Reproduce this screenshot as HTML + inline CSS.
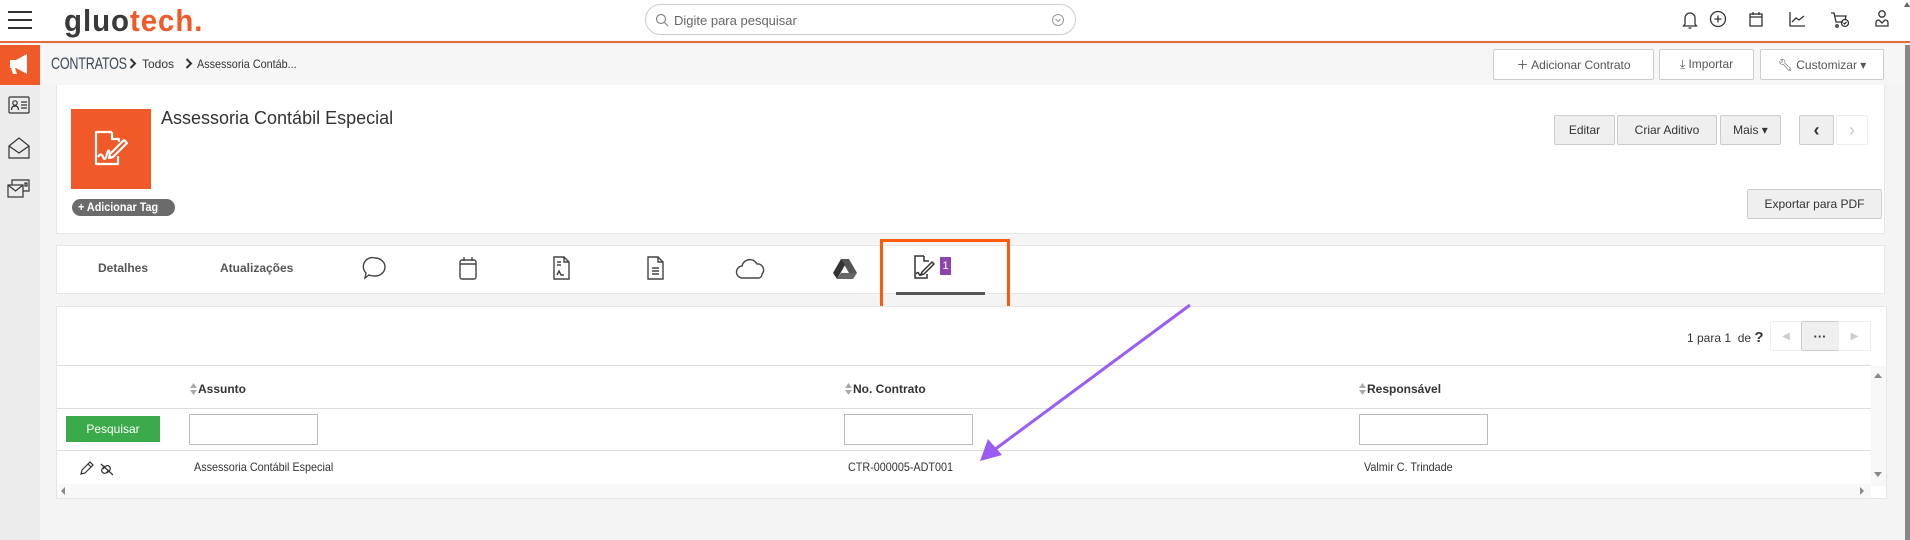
<!DOCTYPE html>
<html><head><meta charset="utf-8"><style>
*{box-sizing:border-box;margin:0;padding:0}
body{width:1910px;height:540px;overflow:hidden;background:#f4f4f4;font-family:"Liberation Sans",sans-serif;font-size:12px;color:#333;position:relative}
.a{position:absolute}
.btn{position:absolute;border:1px solid #ccc;background:#fff;color:#555;font-size:13px;display:flex;align-items:center;justify-content:center;border-radius:2px}
.gb{background:#efefef;color:#333}
.card{position:absolute;background:#fff;border:1px solid #e6e6e6}
.th{position:absolute;font-weight:bold;font-size:12px;color:#333}
.inp{position:absolute;border:1px solid #bbb;background:#fff;height:31px;width:129px}
svg{position:absolute}
.n{transform:scaleX(.9);transform-origin:left;white-space:nowrap}
</style></head><body>
<!-- header -->
<div class="a" style="left:0;top:0;width:1910px;height:43px;background:#fff;border-bottom:2px solid #e8683a"></div>
<div class="a" style="left:8px;top:11px;width:24px;height:2px;background:#333"></div>
<div class="a" style="left:8px;top:19px;width:24px;height:2px;background:#333"></div>
<div class="a" style="left:8px;top:27px;width:24px;height:2px;background:#333"></div>
<div class="a" style="left:64px;top:1px;font-size:31px;font-weight:bold;letter-spacing:1px;line-height:40px;transform:scaleX(.95);transform-origin:left"><span style="color:#3a3a3a">gluo</span><span style="color:#f05a28">tech.</span></div>
<div class="a" style="left:645px;top:4px;width:431px;height:31px;border:1px solid #ccc;border-radius:16px;background:#fff"></div>
<svg style="left:655px;top:13px" width="14" height="14"><circle cx="6" cy="6" r="4.5" fill="none" stroke="#888" stroke-width="1.2"/><path d="M9.5 9.5L13 13" stroke="#888" stroke-width="1.2"/></svg>
<div class="a" style="left:674px;top:13px;font-size:13px;color:#666">Digite para pesquisar</div>
<svg style="left:1051px;top:13px" width="14" height="14"><circle cx="7" cy="7" r="5.5" fill="none" stroke="#999"/><path d="M4.5 6L7 8.5 9.5 6" fill="none" stroke="#999"/></svg>
<!-- header icons -->
<svg style="left:1681px;top:10px" width="18" height="20" fill="none" stroke="#333" stroke-width="1.3"><path d="M4 14V8a5 5 0 0110 0v6l1.5 2h-13z M7.5 18h3"/></svg>
<svg style="left:1709px;top:10px" width="18" height="18" fill="none" stroke="#333" stroke-width="1.3"><circle cx="9" cy="9" r="7.5"/><path d="M9 5.5v7M5.5 9h7"/></svg>
<svg style="left:1748px;top:10px" width="16" height="18" fill="none" stroke="#333" stroke-width="1.3"><rect x="2" y="4" width="12" height="12"/><path d="M2 7h12M5 2v3M11 2v3"/></svg>
<svg style="left:1788px;top:11px" width="18" height="16" fill="none" stroke="#333" stroke-width="1.3"><path d="M2 1v14h15M4 11l4-4 3 2 5-4"/></svg>
<svg style="left:1830px;top:11px" width="20" height="18" fill="none" stroke="#333" stroke-width="1.3"><path d="M1 2h3l2 9h7M5 5h11l-1 4"/><circle cx="7" cy="15" r="1.2"/><circle cx="15" cy="12" r="3.5"/><path d="M13.5 12l1 1 2-2"/></svg>
<svg style="left:1874px;top:9px" width="16" height="20" fill="none" stroke="#333" stroke-width="1.3"><circle cx="8" cy="5" r="3.2"/><path d="M2 17v-3q0-3 3-3l3 3 3-3q3 0 3 3v3z"/></svg>
<!-- page scrollbar -->
<div class="a" style="left:1905px;top:45px;width:5px;height:495px;background:#888"></div>
<div class="a" style="left:1904px;top:2px;width:0;height:0;border-left:3px solid transparent;border-right:3px solid transparent;border-bottom:5px solid #666"></div>
<!-- sidebar -->
<div class="a" style="left:0;top:45px;width:40px;height:495px;background:#ececec"></div>
<div class="a" style="left:0;top:45px;width:40px;height:40px;background:#f05a28"></div>
<svg style="left:7px;top:51px" width="26" height="26" fill="#fff"><path d="M3 9h6l11-6v20l-11-6H8l2 6H6l-2-6H3z"/></svg>
<svg style="left:8px;top:96px" width="22" height="18" fill="none" stroke="#333" stroke-width="1.2"><rect x="1" y="1" width="20" height="16" rx="1"/><circle cx="7" cy="7" r="2.2"/><path d="M3.5 14q0-4 3.5-4t3.5 4M13 6h6M13 9h6M13 12h6"/></svg>
<svg style="left:8px;top:137px" width="22" height="22" fill="none" stroke="#333" stroke-width="1.2"><path d="M1 9l10-8 10 8v12H1zM1 9l10 7 10-7"/></svg>
<svg style="left:7px;top:177px" width="24" height="22" fill="none" stroke="#333" stroke-width="1.2"><rect x="1" y="8" width="15" height="12"/><path d="M1 8l7.5 6 7.5-6M5 8V3h17v11h-6"/><rect x="18" y="6" width="2" height="3"/></svg>
<!-- breadcrumb -->
<div class="a" style="left:40px;top:45px;width:1865px;height:40px;background:#f6f6f6"></div>
<div class="a" style="left:51px;top:54px;font-size:17px;color:#3d4a5a;transform:scaleX(.74);transform-origin:left;letter-spacing:-.3px">CONTRATOS</div>
<svg style="left:129px;top:58px" width="8" height="11" fill="none" stroke="#333" stroke-width="2"><path d="M1.5 1l4.5 4.5L1.5 10"/></svg>
<div class="a" style="left:142px;top:57px;font-size:12px;color:#333">Todos</div>
<svg style="left:185px;top:58px" width="8" height="11" fill="none" stroke="#333" stroke-width="2"><path d="M1.5 1l4.5 4.5L1.5 10"/></svg>
<div class="a n" style="left:197px;top:57px;font-size:12px;color:#333">Assessoria Contáb...</div>
<div class="btn" style="left:1493px;top:49px;width:161px;height:31px;font-size:12px">＋ Adicionar Contrato</div>
<div class="btn" style="left:1659px;top:49px;width:95px;height:31px;font-size:12px">⤓ Importar</div>
<div class="btn" style="left:1760px;top:49px;width:124px;height:31px;font-size:12px">🔧︎ Customizar ▾</div>
<!-- card1 -->
<div class="card" style="left:56px;top:85px;width:1829px;height:149px;border-top:none"></div>
<div class="a" style="left:71px;top:109px;width:80px;height:80px;background:#f05a28"></div>
<svg style="left:90px;top:128px" width="42" height="42" fill="none" stroke="#fff" stroke-width="2.2" stroke-linejoin="round"><path d="M22 4H6v32h22v-8M22 4v7h7v3"/><path d="M8 29q3-5 5 0t4-3 3 2M20 26l14-14 3 3-14 14-4 1z"/></svg>
<div class="a" style="left:161px;top:108px;font-size:18px;color:#333">Assessoria Contábil Especial</div>
<div class="a" style="left:72px;top:199px;width:103px;height:17px;border-radius:9px;background:#6b6b6b;color:#fff;font-size:12px;font-weight:bold;line-height:17px;padding-left:6px"><span class="n" style="display:inline-block">+ Adicionar Tag</span></div>
<div class="btn gb" style="left:1554px;top:115px;width:61px;height:30px;font-size:12px">Editar</div>
<div class="btn gb" style="left:1617px;top:115px;width:100px;height:30px;font-size:12px">Criar Aditivo</div>
<div class="btn gb" style="left:1720px;top:115px;width:61px;height:30px;font-size:12px">Mais ▾</div>
<div class="btn gb" style="left:1799px;top:115px;width:35px;height:30px;font-size:18px;font-weight:bold">‹</div>
<div class="btn" style="left:1836px;top:115px;width:32px;height:30px;font-size:18px;color:#ccc;border-color:#eee">›</div>
<div class="btn gb" style="left:1747px;top:189px;width:135px;height:30px;font-size:12px">Exportar para PDF</div>
<!-- tabs -->
<div class="card" style="left:56px;top:245px;width:1829px;height:49px"></div>
<div class="a" style="left:98px;top:261px;font-size:12px;font-weight:bold;color:#555">Detalhes</div>
<div class="a" style="left:220px;top:261px;font-size:12px;font-weight:bold;color:#555">Atualizações</div>
<svg style="left:362px;top:255px" width="26" height="26" fill="none" stroke="#444" stroke-width="1.4"><path d="M13 3a10 9 0 110 18q-4 0-6-1l-4 3 1-5A9 9 0 0113 3z"/></svg>
<svg style="left:458px;top:255px" width="20" height="26" fill="none" stroke="#444" stroke-width="1.4"><rect x="2" y="5" width="16" height="19" rx="2"/><path d="M2 9h16M6 2v4M14 2v4"/></svg>
<svg style="left:551px;top:255px" width="20" height="26" fill="none" stroke="#444" stroke-width="1.4"><path d="M3 2h10l5 5v17H3zM13 2v5h5M6 7h4M6 10h4M6 20l2-4 2 4 3 0"/></svg>
<svg style="left:645px;top:255px" width="20" height="26" fill="none" stroke="#444" stroke-width="1.4"><path d="M3 2h10l5 5v17H3zM13 2v5h5M7 13h7M7 16h7M7 19h7"/></svg>
<svg style="left:735px;top:256px" width="32" height="24" fill="none" stroke="#444" stroke-width="1.4"><path d="M8 22a6 6 0 01-1-12 8 8 0 0115-2 6 6 0 015 10 4 4 0 01-3 4z"/></svg>
<svg style="left:832px;top:258px" width="26" height="22"><path d="M9 1h8l8 14h-8z" fill="#555"/><path d="M9 1L1 15l4 6 8-14z" fill="#333"/><path d="M5 21h16l4-6H9z" fill="#666"/></svg>
<div class="a" style="left:880px;top:239px;width:130px;height:71px;border:3px solid #fd5a0a"></div>
<svg style="left:912px;top:254px" width="24" height="26" fill="none" stroke="#333" stroke-width="1.5"><path d="M12 2H3v22h12v-4M12 2v5h5"/><path d="M4 20q2-3 3 0t3-2M10 18l10-10 2 2-10 10-3 1z"/></svg>
<div class="a" style="left:940px;top:257px;width:11px;height:18px;background:#8e44ad;color:#fff;font-size:11px;text-align:center;line-height:18px">1</div>
<div class="a" style="left:896px;top:292px;width:89px;height:3px;background:#555"></div>
<!-- table card -->
<div class="card" style="left:56px;top:306px;width:1831px;height:193px"></div>
<div class="a" style="left:1687px;top:329px;font-size:12px;color:#333">1 para 1&nbsp; de <b style="font-size:15px">?</b></div>
<div class="btn" style="left:1770px;top:321px;width:32px;height:30px;border-color:#eee;color:#ccc;font-size:10px">◀</div>
<div class="btn gb" style="left:1801px;top:321px;width:38px;height:30px;font-weight:bold">···</div>
<div class="btn" style="left:1838px;top:321px;width:33px;height:30px;border-color:#eee;color:#ccc;font-size:10px">▶</div>
<div class="a" style="left:57px;top:365px;width:1814px;height:1px;background:#ddd"></div>
<div class="a" style="left:57px;top:408px;width:1814px;height:1px;background:#ddd"></div>
<div class="a" style="left:57px;top:450px;width:1814px;height:1px;background:#ddd"></div>
<div class="a" style="left:1871px;top:366px;width:15px;height:120px;background:#f8f8f8"></div>
<div class="a" style="left:1874px;top:373px;border-left:4px solid transparent;border-right:4px solid transparent;border-bottom:5px solid #888"></div>
<div class="a" style="left:1874px;top:472px;border-left:4px solid transparent;border-right:4px solid transparent;border-top:5px solid #888"></div>
<div class="a" style="left:57px;top:484px;width:1814px;height:14px;background:#f8f8f8"></div>
<div class="a" style="left:61px;top:487px;border-top:4px solid transparent;border-bottom:4px solid transparent;border-right:4px solid #888"></div>
<div class="a" style="left:1860px;top:487px;border-top:4px solid transparent;border-bottom:4px solid transparent;border-left:4px solid #888"></div>
<svg style="left:190px;top:383px" width="7" height="12"><path d="M3.5 0L7 5H0z M3.5 12L7 7H0z" fill="#aaa"/></svg>
<div class="th" style="left:198px;top:382px">Assunto</div>
<svg style="left:845px;top:383px" width="7" height="12"><path d="M3.5 0L7 5H0z M3.5 12L7 7H0z" fill="#aaa"/></svg>
<div class="th" style="left:853px;top:382px">No. Contrato</div>
<svg style="left:1359px;top:383px" width="7" height="12"><path d="M3.5 0L7 5H0z M3.5 12L7 7H0z" fill="#aaa"/></svg>
<div class="th" style="left:1367px;top:382px">Responsável</div>
<div class="a" style="left:66px;top:416px;width:94px;height:26px;background:#3aaa4a;color:#fff;font-size:12px;text-align:center;line-height:26px">Pesquisar</div>
<div class="inp" style="left:189px;top:414px"></div>
<div class="inp" style="left:844px;top:414px"></div>
<div class="inp" style="left:1359px;top:414px"></div>
<svg style="left:79px;top:460px" width="36" height="16" fill="none" stroke="#333" stroke-width="1.2"><path d="M2 14l1-4 8-8 3 3-8 8zM9 4l3 3"/><path d="M22 4l12 11M24 9l3-3a3 3 0 014 4l-3 3M30 10l-3 3a3 3 0 01-4-4l3-3" /></svg>
<div class="a n" style="left:194px;top:460px;font-size:12px">Assessoria Contábil Especial</div>
<div class="a n" style="left:848px;top:460px;font-size:12px">CTR-000005-ADT001</div>
<div class="a n" style="left:1364px;top:460px;font-size:12px">Valmir C. Trindade</div>
<!-- arrow -->
<svg style="left:960px;top:295px" width="240" height="175"><path d="M230 10L30 158" stroke="#9b5cf6" stroke-width="3" fill="none"/><path d="M20 166l8-22 14 16z" fill="#9b5cf6"/></svg>
</body></html>
